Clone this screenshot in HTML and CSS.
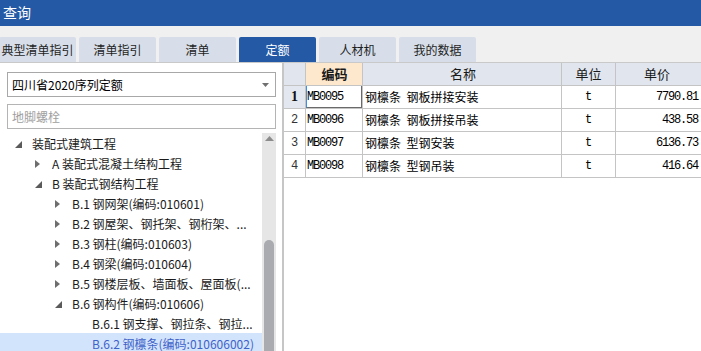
FILE: index.html
```html
<!DOCTYPE html>
<html lang="zh">
<head>
<meta charset="utf-8">
<title>查询</title>
<link rel="stylesheet" href="styles.css">
</head>
<body>
<div class="titlebar">查询</div>
<div class="tabbar">
  <div class="tab">典型清单指引</div>
  <div class="tab">清单指引</div>
  <div class="tab">清单</div>
  <div class="tab active">定额</div>
  <div class="tab">人材机</div>
  <div class="tab">我的数据</div>
</div>
<div class="main">
  <div class="left">
    <div class="select">
      <span>四川省2020序列定额</span>
      <svg class="caret" width="7" height="4" viewBox="0 0 7 4"><path d="M0 0H7L3.5 4Z" fill="#707070"/></svg>
    </div>
    <div class="search"><span class="ph">地脚螺栓</span></div>
    <div class="treewrap">
      <div class="tree">
        <div class="node l0"><span class="arr"><svg width="7" height="7" viewBox="0 0 7 7"><path d="M7 0V7H0Z" fill="#5a5a5a"/></svg></span><span class="lbl">装配式建筑工程</span></div>
        <div class="node l1"><span class="arr"><svg width="5" height="8" viewBox="0 0 5 8"><path d="M0 0L5 4L0 8Z" fill="#6e6e6e"/></svg></span><span class="lbl">A 装配式混凝土结构工程</span></div>
        <div class="node l1"><span class="arr"><svg width="7" height="7" viewBox="0 0 7 7"><path d="M7 0V7H0Z" fill="#5a5a5a"/></svg></span><span class="lbl">B 装配式钢结构工程</span></div>
        <div class="node l2"><span class="arr"><svg width="5" height="8" viewBox="0 0 5 8"><path d="M0 0L5 4L0 8Z" fill="#6e6e6e"/></svg></span><span class="lbl">B.1 钢网架(编码:010601)</span></div>
        <div class="node l2"><span class="arr"><svg width="5" height="8" viewBox="0 0 5 8"><path d="M0 0L5 4L0 8Z" fill="#6e6e6e"/></svg></span><span class="lbl">B.2 钢屋架、钢托架、钢桁架、...</span></div>
        <div class="node l2"><span class="arr"><svg width="5" height="8" viewBox="0 0 5 8"><path d="M0 0L5 4L0 8Z" fill="#6e6e6e"/></svg></span><span class="lbl">B.3 钢柱(编码:010603)</span></div>
        <div class="node l2"><span class="arr"><svg width="5" height="8" viewBox="0 0 5 8"><path d="M0 0L5 4L0 8Z" fill="#6e6e6e"/></svg></span><span class="lbl">B.4 钢梁(编码:010604)</span></div>
        <div class="node l2"><span class="arr"><svg width="5" height="8" viewBox="0 0 5 8"><path d="M0 0L5 4L0 8Z" fill="#6e6e6e"/></svg></span><span class="lbl">B.5 钢楼层板、墙面板、屋面板(...</span></div>
        <div class="node l2"><span class="arr"><svg width="7" height="7" viewBox="0 0 7 7"><path d="M7 0V7H0Z" fill="#5a5a5a"/></svg></span><span class="lbl">B.6 钢构件(编码:010606)</span></div>
        <div class="node l3"><span class="arr"></span><span class="lbl">B.6.1 钢支撑、钢拉条、钢拉...</span></div>
        <div class="node l3 sel"><span class="arr"></span><span class="lbl">B.6.2 钢檩条(编码:010606002)</span></div>
      </div>
      <div class="vscroll">
        <svg class="up" width="9" height="5" viewBox="0 0 9 5"><path d="M0 5L4.5 0L9 5Z" fill="#8c8c8c"/></svg>
        <div class="thumb"></div>
      </div>
    </div>
  </div>
  <div class="right">
    <div class="grow head">
      <div class="c num"></div>
      <div class="c code hl">编码</div>
      <div class="c name">名称</div>
      <div class="c unit">单位</div>
      <div class="c price">单价</div>
    </div>
    <div class="grow">
      <div class="c num cur">1</div>
      <div class="c code focus">MB0095</div>
      <div class="c name">钢檩条&nbsp; 钢板拼接安装</div>
      <div class="c unit">t</div>
      <div class="c price">7790.81</div>
    </div>
    <div class="grow">
      <div class="c num">2</div>
      <div class="c code">MB0096</div>
      <div class="c name">钢檩条&nbsp; 钢板拼接吊装</div>
      <div class="c unit">t</div>
      <div class="c price">438.58</div>
    </div>
    <div class="grow">
      <div class="c num">3</div>
      <div class="c code">MB0097</div>
      <div class="c name">钢檩条&nbsp; 型钢安装</div>
      <div class="c unit">t</div>
      <div class="c price">6136.73</div>
    </div>
    <div class="grow">
      <div class="c num">4</div>
      <div class="c code">MB0098</div>
      <div class="c name">钢檩条&nbsp; 型钢吊装</div>
      <div class="c unit">t</div>
      <div class="c price">416.64</div>
    </div>
  </div>
</div>
</body>
</html>
```
FILE: styles.css
```css
* { box-sizing: border-box; }
html, body {
  margin: 0;
  padding: 0;
  width: 701px;
  height: 351px;
  overflow: hidden;
  background: #ffffff;
  font-family: "Noto Sans CJK SC", "Noto Sans", sans-serif;
  font-size: 12px;
  color: #222;
}
.titlebar {
  height: 26px;
  background: #2459a5;
  color: #fff;
  font-size: 14px;
  line-height: 25px;
  padding-left: 3px;
}
.tabbar {
  height: 37px;
  background: #f0f0f0;
  border-bottom: 1px solid #c9c9c9;
  display: flex;
  align-items: flex-end;
  gap: 3px;
  margin-left: -1px;
}
.tab {
  width: 77px;
  height: 25px;
  background: #d7dee9;
  border-radius: 2px 2px 0 0;
  text-align: center;
  line-height: 25px;
  color: #1e1e1e;
  font-size: 12px;
}
.tab.active {
  background: #2459a5;
  color: #fff;
}
.main {
  display: flex;
  height: 288px;
}
.left {
  width: 282px;
  flex: none;
  padding-top: 9px;
  display: flex;
  flex-direction: column;
}
.select {
  margin: 0 6px 0 7px;
  height: 25px;
  border: 1px solid #a8a8a8;
  display: flex;
  align-items: center;
  justify-content: space-between;
  padding: 0 6px 0 4px;
  color: #000;
}
.caret { margin-top: 1px; }
.search {
  margin: 7px 6px 0 7px;
  height: 25px;
  border: 1px solid #b4b4b4;
  display: flex;
  align-items: center;
  padding-left: 4px;
}
.ph { color: #9e9e9e; }
.treewrap {
  margin-top: 4px;
  display: flex;
  flex: 1;
  min-height: 0;
}
.tree {
  width: 262px;
  flex: none;
  overflow: hidden;
}
.node {
  height: 20px;
  display: flex;
  align-items: center;
  padding-right: 4px;
  color: #1a1a1a;
}
.node.l0 { padding-left: 12px; }
.node.l1 { padding-left: 32px; }
.node.l2 { padding-left: 52px; }
.node.l3 { padding-left: 72px; }
.arr {
  width: 20px;
  flex: none;
  display: flex;
  align-items: center;
  padding-left: 3px;
  padding-top: 2px;
}
.lbl {
  flex: 1;
  min-width: 0;
  white-space: nowrap;
}
.node.sel {
  background: #d2e4fb;
  color: #3f62c9;
}
.vscroll {
  width: 14px;
  flex: none;
  background: #e6e6e6;
  display: flex;
  flex-direction: column;
  align-items: center;
  padding-top: 3px;
}
.up { flex: none; }
.thumb {
  width: 10px;
  margin-top: 99px;
  flex: 1;
  background: #a9abb0;
  border-radius: 5px 5px 0 0;
}
.right {
  flex: 1;
  border-left: 2px solid #c6c6c6;
  overflow: hidden;
}
.grow {
  display: grid;
  grid-template-columns: 22px 57px 199px 54px 86px;
  height: 23px;
}
.c {
  border-right: 1px solid #c4c4c4;
  border-bottom: 1px solid #c4c4c4;
  line-height: 22px;
  white-space: nowrap;
  overflow: hidden;
}
.head .c {
  background: #e1e6ee;
  text-align: center;
  color: #1a1a1a;
  font-family: "Noto Sans CJK SC", sans-serif;
  font-size: 13px;
  letter-spacing: 0;
}
.head .c.hl {
  background: #fde8cd;
  font-weight: bold;
}
.num {
  text-align: center;
  font-family: "Liberation Mono", monospace;
  font-size: 12px;
  color: #333;
}
.num.cur {
  background: #e2e7f0;
  font-family: "Liberation Serif", serif;
  font-weight: bold;
  font-size: 14px;
  color: #111;
}
.code {
  padding-left: 1px;
  font-family: "Liberation Mono", monospace;
  font-size: 12px;
  letter-spacing: -1.2px;
  color: #000;
}
.code.focus {
  position: relative;
}
.code.focus::after {
  content: "";
  position: absolute;
  left: -1px;
  top: 0;
  right: -1px;
  bottom: -1px;
  border-left: 2px solid #3d8fe8;
  border-right: 2px solid #6a6a6a;
  border-bottom: 2px solid #6a6a6a;
}
.name {
  padding-left: 2px;
  color: #000;
}
.unit {
  text-align: center;
  font-family: "Liberation Mono", monospace;
  font-size: 12px;
  color: #000;
}
.price {
  text-align: right;
  padding-right: 3px;
  font-family: "Liberation Mono", monospace;
  font-size: 12px;
  letter-spacing: -1.2px;
  color: #000;
}
```
